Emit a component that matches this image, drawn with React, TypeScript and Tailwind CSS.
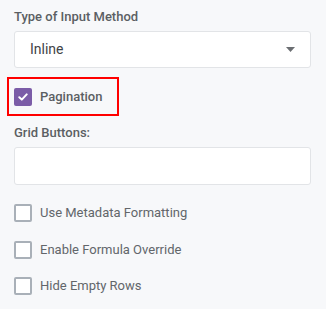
import React from "react";

function Box({ checked }: { checked?: boolean }) {
  if (checked) {
    return (
      <span className="flex h-[18px] w-[18px] shrink-0 items-center justify-center rounded-[2px] bg-[#7b5ca7]">
        <svg width="10" height="8" viewBox="0 0 10 8" fill="none">
          <path d="M1.3 4.2 3.8 6.6 8.7 1.4" stroke="#fff" strokeWidth="2" strokeLinecap="round" strokeLinejoin="round" />
        </svg>
      </span>
    );
  }
  return <span className="h-[18px] w-[18px] shrink-0 rounded-[2px] border-2 border-[#a9b0b8] bg-white" />;
}

const options = ["Use Metadata Formatting", "Enable Formula Override", "Hide Empty Rows"];

export default function App() {
  return (
    <div className="h-[309px] w-[326px] bg-[#f7f8fa] px-[14px] pt-[9px] font-['Roboto',sans-serif]">
      <div className="text-[13px] font-medium leading-[16px] text-[#5b5f63]">Type of Input Method</div>
      <div className="mt-[6px] flex h-[37px] w-[297px] items-center justify-between rounded-[3px] border border-[#e2e4e7] bg-white pl-[15px] pr-[15px]">
        <span className="text-[14px] text-[#3f4347]">Inline</span>
        <svg width="9" height="5" viewBox="0 0 9 5">
          <path d="M0 0h9L4.5 5z" fill="#6b6e72" />
        </svg>
      </div>

      <div className="-ml-[7px] mt-[9px] flex h-[39px] w-[112px] items-center gap-[8px] border-2 border-[#ff0000] pl-[5px]">
        <Box checked />
        <span className="text-[13px] font-medium text-[#5b5f63]">Pagination</span>
      </div>

      <div className="mt-[9px] text-[13px] font-medium leading-[16px] text-[#5b5f63]">Grid Buttons:</div>
      <div className="mt-[6px] h-[38px] w-[297px] rounded-[3px] border border-[#e2e4e7] bg-white" />

      <div className="mt-[19px] flex flex-col gap-[18.5px]">
        {options.map((o) => (
          <label key={o} className="flex h-[18px] items-center gap-[8px]">
            <Box />
            <span className="text-[13px] text-[#62666a]">{o}</span>
          </label>
        ))}
      </div>
    </div>
  );
}
